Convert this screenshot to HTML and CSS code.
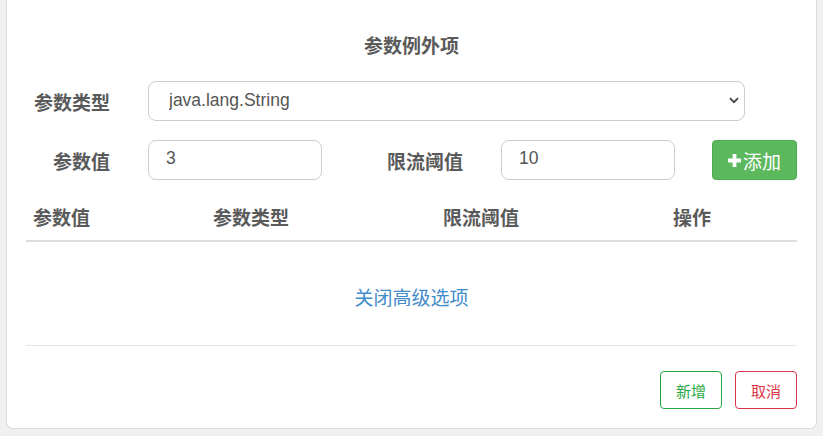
FILE: index.html
```html
<!DOCTYPE html>
<html lang="zh-CN">
<head>
<meta charset="utf-8">
<title>参数例外项</title>
<link rel="stylesheet" href="styles.css">
</head>
<body>
<div class="page">
  <div class="card">
    <h4 class="title">参数例外项</h4>
    <div class="form-row">
      <label class="label">参数类型</label>
      <div class="select-wrap">
        <select class="control select">
          <option>java.lang.String</option>
        </select>
        <svg class="chevron" width="10" height="7" viewBox="0 0 10 7"><path d="M1 1.2 L5 5.2 L9 1.2" fill="none" stroke="#444" stroke-width="1.8"/></svg>
      </div>
    </div>
    <div class="form-row row2">
      <label class="label">参数值</label>
      <input class="control input" type="text" value="3">
      <label class="label label2">限流阈值</label>
      <input class="control input" type="text" value="10">
      <button class="btn-add" type="button"><svg class="plus" width="13" height="13" viewBox="0 0 13 13"><path d="M4.6 0 H8.4 V4.6 H13 V8.4 H8.4 V13 H4.6 V8.4 H0 V4.6 H4.6 Z" fill="#fff"/></svg>添加</button>
    </div>
    <div class="table-head">
      <div class="th">参数值</div>
      <div class="th">参数类型</div>
      <div class="th">限流阈值</div>
      <div class="th">操作</div>
    </div>
    <div class="link-row"><a class="link" href="#">关闭高级选项</a></div>
    <div class="footer">
      <button class="btn btn-success" type="button">新增</button>
      <button class="btn btn-danger" type="button">取消</button>
    </div>
  </div>
</div>
</body>
</html>
```
FILE: styles.css
```css
* { box-sizing: border-box; }
html, body { margin: 0; padding: 0; }
body {
  background: #f0f0f0;
  font-family: "Liberation Sans", "Noto Sans CJK SC", sans-serif;
  color: #555;
}
.page {
  padding: 0 6px 8px 6px;
}
.card {
  background: #fff;
  border: 1px solid #dcdcdc;
  border-top: 0;
  border-radius: 0 0 7px 7px;
  padding: 0 19px 19px 19px;
}
.title {
  margin: 0;
  padding-top: 34px;
  text-align: center;
  font-size: 19px;
  line-height: 26px;
  font-weight: bold;
  color: #5a5a5a;
}
.form-row {
  display: flex;
  align-items: center;
  margin-top: 21px;
}
.row2 { margin-top: 19px; }
.label {
  width: 84px;
  margin-right: 38px;
  text-align: right;
  font-size: 19px;
  font-weight: bold;
  color: #5a5a5a;
  flex: none;
}
.label2 { width: 141px; }
.control {
  height: 40px;
  border: 1px solid #ccc;
  border-radius: 8px;
  background: #fff;
  color: #555;
  font-family: "Liberation Sans", "Noto Sans CJK SC", sans-serif;
  font-size: 17.5px;
  outline: none;
}
.select-wrap {
  position: relative;
  width: 597px;
}
.select {
  width: 100%;
  appearance: none;
  -webkit-appearance: none;
  padding: 0 30px 2px 20px;
}
.chevron {
  position: absolute;
  right: 6px;
  top: 16px;
}
.input {
  width: 174px;
  padding: 0 17px 3px 17px;
  flex: none;
}
.btn-add {
  margin-left: 37px;
  width: 86px;
  height: 40px;
  background: #5cb85c;
  border: 1px solid #4cae4c;
  border-radius: 4px;
  color: #fff;
  font-family: "Liberation Sans", "Noto Sans CJK SC", sans-serif;
  font-size: 19px;
  display: flex;
  align-items: center;
  justify-content: center;
  gap: 2px;
  padding: 0;
}
.plus { margin-top: 1px; }
.table-head {
  display: grid;
  grid-template-columns: 180px 230px 230px 131px;
  margin-top: 18px;
  border-bottom: 2px solid #ddd;
}
.th {
  padding: 8px 7px;
  font-size: 19px;
  line-height: 26px;
  font-weight: bold;
  color: #5a5a5a;
}
.link-row {
  text-align: center;
  padding: 44px 0 0 0;
  height: 104px;
  border-bottom: 1px solid #e5e5e5;
}
.link {
  color: #428bca;
  text-decoration: none;
  font-size: 19px;
  line-height: 26px;
}
.footer {
  display: flex;
  justify-content: flex-end;
  gap: 13px;
  padding-top: 25px;
}
.btn {
  width: 62px;
  height: 38px;
  background: #fff;
  border-radius: 4px;
  font-family: "Liberation Sans", "Noto Sans CJK SC", sans-serif;
  font-size: 15px;
  padding: 0;
}
.btn-success { border: 1px solid #28a745; color: #28a745; }
.btn-danger { border: 1px solid #dc3545; color: #dc3545; }
```
